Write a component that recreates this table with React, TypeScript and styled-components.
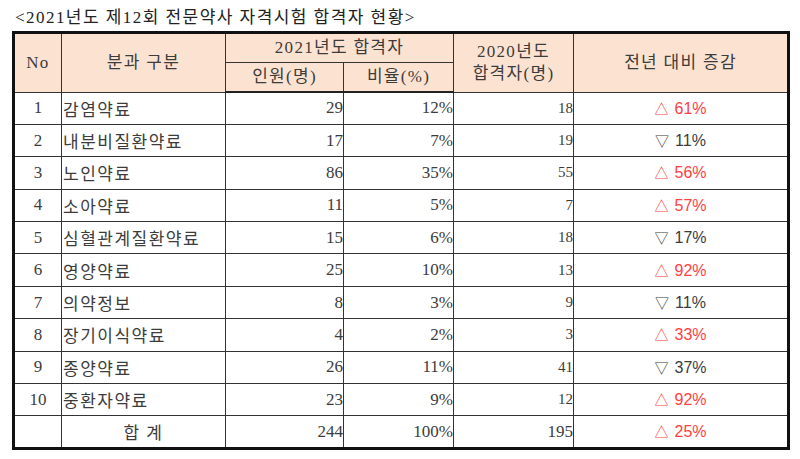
import React from "react";
import styled, { createGlobalStyle } from "styled-components";

const GlobalStyle = createGlobalStyle`
  html, body {
    margin: 0;
    padding: 0;
    background: #ffffff;
  }
  body {
    font-family: "Liberation Serif", "Noto Sans CJK KR", serif;
    color: #3c3c3c;
  }
`;

const Page = styled.div`
  width: 800px;
  height: 459px;
  padding: 7px 0 0 12px;
  box-sizing: border-box;
`;

const Title = styled.div`
  font-size: 17px;
  line-height: 22px;
  height: 24px;
  padding-left: 3px;
  color: #222;
  white-space: nowrap;
  letter-spacing: 1.45px;
`;

const Table = styled.table`
  border-collapse: collapse;
  width: 778px;
  table-layout: fixed;
  border: 3px solid #111;
  font-size: 17px;
`;

const HeadCell = styled.th<{ $h?: number; $lh?: number }>`
  background: #fce3d1;
  font-weight: normal;
  color: #3c3c3c;
  border: 1px solid #333;
  height: ${(p) => p.$h ?? 28}px;
  padding: 0;
  text-align: center;
  line-height: ${(p) => p.$lh ?? 20}px;
  white-space: nowrap;
  letter-spacing: 1.3px;
`;

const HeadRow = styled.tr`
  &:last-child th {
    border-bottom: 2px solid #222;
  }
`;

const Row = styled.tr`
  height: 32.4px;
`;

const Cell = styled.td<{
  $align?: "left" | "right" | "center";
  $noLeft?: boolean;
  $small?: boolean;
  $wide?: boolean;
}>`
  border: 1px solid #333;
  ${(p) => (p.$noLeft ? "border-left-color: transparent;" : "")}
  padding: 0 0 0 ${(p) => (p.$align === "left" ? "1px" : "0")};
  text-align: ${(p) => p.$align ?? "center"};
  font-size: ${(p) => (p.$small ? "15px" : "17px")};
  letter-spacing: ${(p) => (p.$wide ? "1.5px" : "0")};
  white-space: nowrap;
`;

const Change = styled.span<{ $up: boolean }>`
  font-family: "Liberation Sans", "Noto Sans CJK KR", sans-serif;
  color: ${(p) => (p.$up ? "#ff4040" : "#3c3c3c")};
  font-size: 16px;
`;

const Tri = styled.span`
  font-family: "Noto Sans CJK KR", sans-serif;
  font-size: 14px;
  margin-right: 6px;
`;

type Item = {
  no: string;
  name: string;
  count: number;
  ratio: string;
  prev: number;
  up: boolean;
  diff: string;
  noLeft?: boolean;
};

const items: Item[] = [
  { no: "1", name: "감염약료", count: 29, ratio: "12%", prev: 18, up: true, diff: "61%" },
  { no: "2", name: "내분비질환약료", count: 17, ratio: "7%", prev: 19, up: false, diff: "11%" },
  { no: "3", name: "노인약료", count: 86, ratio: "35%", prev: 55, up: true, diff: "56%" },
  { no: "4", name: "소아약료", count: 11, ratio: "5%", prev: 7, up: true, diff: "57%" },
  { no: "5", name: "심혈관계질환약료", count: 15, ratio: "6%", prev: 18, up: false, diff: "17%" },
  { no: "6", name: "영양약료", count: 25, ratio: "10%", prev: 13, up: true, diff: "92%", noLeft: true },
  { no: "7", name: "의약정보", count: 8, ratio: "3%", prev: 9, up: false, diff: "11%" },
  { no: "8", name: "장기이식약료", count: 4, ratio: "2%", prev: 3, up: true, diff: "33%" },
  { no: "9", name: "종양약료", count: 26, ratio: "11%", prev: 41, up: false, diff: "37%" },
  { no: "10", name: "중환자약료", count: 23, ratio: "9%", prev: 12, up: true, diff: "92%" },
];

export default function App() {
  return (
    <Page>
      <GlobalStyle />
      <Title>&lt;2021년도 제12회 전문약사 자격시험 합격자 현황&gt;</Title>
      <Table>
        <colgroup>
          <col style={{ width: 48 }} />
          <col style={{ width: 164 }} />
          <col style={{ width: 118 }} />
          <col style={{ width: 110 }} />
          <col style={{ width: 120 }} />
          <col />
        </colgroup>
        <thead>
          <HeadRow>
            <HeadCell rowSpan={2}>No</HeadCell>
            <HeadCell rowSpan={2}>분과 구분</HeadCell>
            <HeadCell colSpan={2}>2021년도 합격자</HeadCell>
            <HeadCell rowSpan={2} $lh={22}>
              2020년도
              <br />
              합격자(명)
            </HeadCell>
            <HeadCell rowSpan={2}>전년 대비 증감</HeadCell>
          </HeadRow>
          <HeadRow>
            <HeadCell $h={28}>인원(명)</HeadCell>
            <HeadCell $h={28}>비율(%)</HeadCell>
          </HeadRow>
        </thead>
        <tbody>
          {items.map((it) => (
            <Row key={it.no}>
              <Cell>{it.no}</Cell>
              <Cell $align="left" $noLeft={it.noLeft} $wide>
                {it.name}
              </Cell>
              <Cell $align="right">{it.count}</Cell>
              <Cell $align="right">{it.ratio}</Cell>
              <Cell $align="right" $small>
                {it.prev}
              </Cell>
              <Cell>
                <Change $up={it.up}>
                  <Tri>{it.up ? "△" : "▽"}</Tri>
                  {it.diff}
                </Change>
              </Cell>
            </Row>
          ))}
          <Row>
            <Cell />
            <Cell $wide>합 계</Cell>
            <Cell $align="right">244</Cell>
            <Cell $align="right">100%</Cell>
            <Cell $align="right">195</Cell>
            <Cell>
              <Change $up>
                <Tri>△</Tri>25%
              </Change>
            </Cell>
          </Row>
        </tbody>
      </Table>
    </Page>
  );
}
